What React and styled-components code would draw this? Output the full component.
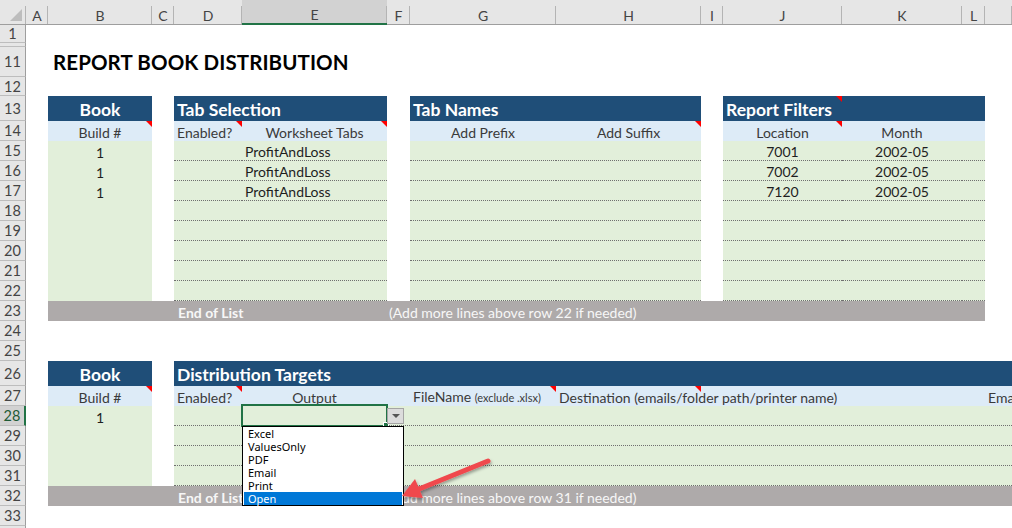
import React from 'react';
import styled, { createGlobalStyle, css } from 'styled-components';

const COLS = [26, 22, 104, 22, 68, 145, 23, 146, 145, 22, 119, 120, 23];
const TEMPLATE = COLS.map((w) => `${w}px`).join(' ') + ' 1fr';
const FONT = `Lato, "Open Sans", "Liberation Sans", sans-serif`;
const GREEN = '#217346';

const GlobalStyle = createGlobalStyle`
  html, body { margin: 0; padding: 0; background: #fff; }
  body { font-family: ${FONT}; overflow: hidden; }
`;

const Sheet = styled.div`
  position: relative;
  width: 1012px;
  height: 528px;
  overflow: hidden;
  background: #ffffff;
  font-family: ${FONT};
`;

const Row = styled.div`
  display: grid;
  grid-template-columns: ${TEMPLATE};
  height: ${(p) => p.$h}px;
`;

const Corner = styled.div`
  position: relative;
  box-sizing: border-box;
  background: #e6e6e6;
  border-bottom: 1px solid #9e9e9e;
  &::before {
    content: '';
    position: absolute;
    right: 0;
    top: 6px;
    bottom: 0;
    width: 1px;
    background: #b4b4b4;
  }
  &::after {
    content: '';
    position: absolute;
    right: 4px;
    bottom: 3px;
    border-bottom: 12px solid #bdbdbd;
    border-left: 12px solid transparent;
  }
`;

const ColHead = styled.div`
  position: relative;
  box-sizing: border-box;
  padding-top: 6px;
  display: flex;
  align-items: center;
  justify-content: center;
  background: ${(p) => (p.$active ? '#d2d2d2' : '#e6e6e6')};
  border-bottom: ${(p) => (p.$active ? `2px solid ${GREEN}` : '1px solid #9e9e9e')};
  font-size: 14px;
  color: #444;
  &::after {
    content: '';
    position: absolute;
    right: 0;
    top: 6px;
    bottom: 0;
    width: 1px;
    background: #b4b4b4;
  }
`;

const RowHead = styled.div`
  box-sizing: border-box;
  display: flex;
  align-items: center;
  justify-content: center;
  background: ${(p) => (p.$active ? '#d2d2d2' : '#e6e6e6')};
  border-right: ${(p) => (p.$active ? `2px solid ${GREEN}` : '1px solid #9e9e9e')};
  border-bottom: 1px solid #bdbdbd;
  font-size: 14.5px;
  color: ${(p) => (p.$active ? '#1d5a35' : '#444')};
`;

const KINDS = {
  blank: { bg: 'transparent', color: '#1e1e1e' },
  dark: { bg: '#1f4e78', color: '#ffffff' },
  sub: { bg: '#ddebf7', color: '#3a3a3a' },
  data: { bg: '#e2efda', color: '#1e1e1e' },
  band: { bg: '#aeaaaa', color: '#f7f7f7' },
};

const Cell = styled.div`
  position: relative;
  box-sizing: border-box;
  grid-column: span ${(p) => p.$span || 1};
  display: flex;
  align-items: flex-end;
  justify-content: ${(p) => (p.$align === 'center' ? 'center' : 'flex-start')};
  padding: 0 ${(p) => (p.$align === 'center' ? 0 : p.$pl ?? 3)}px ${(p) => p.$pb ?? 0}px;
  background: ${(p) => KINDS[p.$kind || 'blank'].bg};
  color: ${(p) => KINDS[p.$kind || 'blank'].color};
  white-space: nowrap;
  ${(p) => p.$dotted && css`border-bottom: 1px dotted #6f6f6f;`}
  ${(p) =>
    p.$note &&
    css`
      &::before {
        content: '';
        position: absolute;
        top: 0;
        right: 0;
        z-index: 2;
        border-top: 6px solid #ff0000;
        border-left: 6px solid transparent;
      }
    `}
`;

const Txt = styled.span`
  position: relative;
  z-index: 1;
  font-size: ${(p) => p.$size || 14}px;
  font-weight: ${(p) => (p.$bold ? 700 : 400)};
  line-height: ${(p) => Math.round((p.$size || 14) * 1.22)}px;
`;

const Small = styled.span`
  font-size: 11px;
`;

const Title = styled(Txt)`
  font-size: 20.5px;
  font-weight: 700;
  color: #000;
  letter-spacing: 0.1px;
`;

/* ---- Dropdown overlay (lies over the sheet) ---- */
const Selection = styled.div`
  position: absolute;
  left: 241px;
  top: 404px;
  width: 147px;
  height: 23px;
  box-sizing: border-box;
  border: 2px solid ${GREEN};
  z-index: 3;
`;

const FillHandle = styled.div`
  position: absolute;
  left: 383px;
  top: 422px;
  width: 6px;
  height: 6px;
  box-sizing: border-box;
  background: ${GREEN};
  border: 1px solid #fff;
  z-index: 4;
`;

const DropButton = styled.div`
  position: absolute;
  left: 387px;
  top: 408px;
  width: 17px;
  height: 16px;
  box-sizing: border-box;
  background: #dcdcdc;
  border: 1px solid #a5a5a5;
  display: flex;
  align-items: center;
  justify-content: center;
  z-index: 4;
  &::after {
    content: '';
    border-top: 4px solid #555;
    border-left: 4px solid transparent;
    border-right: 4px solid transparent;
  }
`;

const List = styled.div`
  position: absolute;
  left: 242px;
  top: 426px;
  width: 162px;
  height: 80px;
  box-sizing: border-box;
  background: #fff;
  border: 1px solid #000;
  padding: 0 1px;
  display: flex;
  flex-direction: column;
  z-index: 5;
  font-family: "Noto Sans", "DejaVu Sans", sans-serif;
`;

const ListItem = styled.div`
  height: 13px;
  line-height: 13px;
  font-size: 11px;
  padding-left: 4px;
  color: ${(p) => (p.$active ? '#fff' : '#000')};
  background: ${(p) => (p.$active ? '#0078d7' : 'transparent')};
`;

const ArrowSvg = styled.svg`
  position: absolute;
  left: 395px;
  top: 448px;
  z-index: 6;
  overflow: visible;
`;

/* ---- helpers ---- */
const C = ({ kind, span, align, note, dotted, pb, pl, children }) => (
  <Cell $kind={kind} $span={span} $align={align} $note={note} $dotted={dotted} $pb={pb} $pl={pl}>
    {children}
  </Cell>
);

const LETTERS = ['A', 'B', 'C', 'D', 'E', 'F', 'G', 'H', 'I', 'J', 'K', 'L', ''];

const tabData = [
  { b: '1', e: 'ProfitAndLoss', j: '7001', k: '2002-05' },
  { b: '1', e: 'ProfitAndLoss', j: '7002', k: '2002-05' },
  { b: '1', e: 'ProfitAndLoss', j: '7120', k: '2002-05' },
  {}, {}, {}, {}, {},
];

const options = ['Excel', 'ValuesOnly', 'PDF', 'Email', 'Print', 'Open'];

const Blank = ({ n, h, active }) => (
  <Row $h={h}>
    <RowHead $active={active}>{n}</RowHead>
  </Row>
);

export default function App() {
  return (
    <>
      <GlobalStyle />
      <Sheet>
        <Row $h={25}>
          <Corner />
          {LETTERS.map((l, i) => (
            <ColHead key={i} $active={l === 'E'}>{l}</ColHead>
          ))}
        </Row>

        <Blank n="1" h={18} />
        <Blank n="" h={4} />

        <Row $h={30}>
          <RowHead>11</RowHead>
          <C />
          <C span={7} pb={6} pl={5}>
            <Title>REPORT BOOK DISTRIBUTION</Title>
          </C>
        </Row>

        <Blank n="12" h={19} />

        <Row $h={25}>
          <RowHead>13</RowHead>
          <C />
          <C kind="dark" align="center" pb={1}><Txt $size={17.5} $bold>Book</Txt></C>
          <C />
          <C kind="dark" span={2} pb={1}><Txt $size={17.5} $bold>Tab Selection</Txt></C>
          <C />
          <C kind="dark" span={2} pb={1}><Txt $size={17.5} $bold>Tab Names</Txt></C>
          <C />
          <C kind="dark" note pb={1}><Txt $size={17.5} $bold>Report Filters</Txt></C>
          <C kind="dark" span={2} />
        </Row>

        <Row $h={20}>
          <RowHead>14</RowHead>
          <C />
          <C kind="sub" align="center" note><Txt>Build #</Txt></C>
          <C />
          <C kind="sub" note><Txt>Enabled?</Txt></C>
          <C kind="sub" align="center" note><Txt>Worksheet Tabs</Txt></C>
          <C />
          <C kind="sub" align="center"><Txt>Add Prefix</Txt></C>
          <C kind="sub" align="center" note><Txt>Add Suffix</Txt></C>
          <C />
          <C kind="sub" align="center" note><Txt>Location</Txt></C>
          <C kind="sub" align="center"><Txt>Month</Txt></C>
          <C kind="sub" />
        </Row>

        {tabData.map((d, i) => (
          <Row $h={20} key={i}>
            <RowHead>{15 + i}</RowHead>
            <C />
            <C kind="data" align="center"><Txt>{d.b}</Txt></C>
            <C />
            <C kind="data" dotted />
            <C kind="data" dotted><Txt>{d.e}</Txt></C>
            <C />
            <C kind="data" dotted />
            <C kind="data" dotted />
            <C />
            <C kind="data" dotted align="center"><Txt>{d.j}</Txt></C>
            <C kind="data" dotted align="center"><Txt>{d.k}</Txt></C>
            <C kind="data" dotted />
          </Row>
        ))}

        <Row $h={20}>
          <RowHead>23</RowHead>
          <C />
          <C kind="band" span={2} />
          <C kind="band" pl={4}><Txt $bold>End of List</Txt></C>
          <C kind="band" />
          <C kind="band" pl={2}><Txt>(Add more lines above row 22 if needed)</Txt></C>
          <C kind="band" span={6} />
        </Row>

        <Blank n="24" h={20} />
        <Blank n="25" h={20} />

        <Row $h={25}>
          <RowHead>26</RowHead>
          <C />
          <C kind="dark" align="center" pb={1}><Txt $size={17.5} $bold>Book</Txt></C>
          <C />
          <C kind="dark" span={10} pb={1}><Txt $size={17.5} $bold>Distribution Targets</Txt></C>
        </Row>

        <Row $h={20}>
          <RowHead>27</RowHead>
          <C />
          <C kind="sub" align="center" note><Txt>Build #</Txt></C>
          <C />
          <C kind="sub" note><Txt>Enabled?</Txt></C>
          <C kind="sub" align="center"><Txt>Output</Txt></C>
          <C kind="sub" />
          <C kind="sub" note><Txt>FileName <Small>(exclude .xlsx)</Small></Txt></C>
          <C kind="sub" note><Txt>Destination (emails/folder path/printer name)</Txt></C>
          <C kind="sub" span={4} />
          <C kind="sub"><Txt>Email</Txt></C>
        </Row>

        {[0, 1, 2, 3].map((i) => (
          <Row $h={20} key={i}>
            <RowHead $active={i === 0}>{28 + i}</RowHead>
            <C />
            <C kind="data" align="center"><Txt>{i === 0 ? '1' : ''}</Txt></C>
            <C />
            <C kind="data" dotted />
            <C kind="data" dotted />
            <C kind="data" dotted span={8} />
          </Row>
        ))}

        <Row $h={20}>
          <RowHead>32</RowHead>
          <C />
          <C kind="band" span={2} />
          <C kind="band" pl={4}><Txt $bold>End of List</Txt></C>
          <C kind="band" />
          <C kind="band" pl={2}><Txt>(Add more lines above row 31 if needed)</Txt></C>
          <C kind="band" span={7} />
        </Row>

        <Blank n="33" h={20} />
        <Blank n="" h={20} />

        <Selection />
        <FillHandle />
        <DropButton />
        <List>
          {options.map((o) => (
            <ListItem key={o} $active={o === 'Open'}>{o}</ListItem>
          ))}
        </List>

        <ArrowSvg width="110" height="60" viewBox="0 0 110 60">
          <defs>
            <filter id="sh" x="-20%" y="-20%" width="140%" height="150%">
              <feDropShadow dx="1" dy="2" stdDeviation="1.5" floodColor="#000" floodOpacity="0.35" />
            </filter>
          </defs>
          <g filter="url(#sh)" fill="#f04a4e" stroke="#f04a4e">
            <line x1="93" y1="13" x2="24" y2="41" strokeWidth="5" strokeLinecap="round" />
            <polygon points="7,48 20,31 28,50" stroke="none" />
          </g>
        </ArrowSvg>
      </Sheet>
    </>
  );
}
